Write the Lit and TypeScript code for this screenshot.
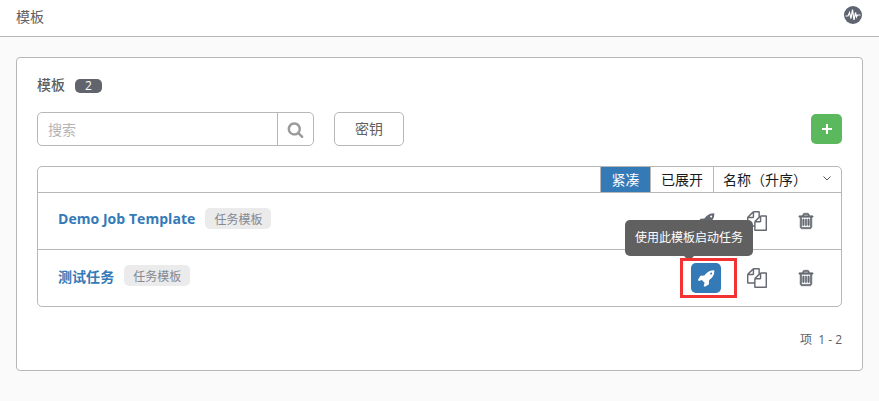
import { LitElement, html, css, svg } from "lit";
import { customElement } from "lit/decorators.js";

const ROCKET = svg`<path d="M1504 448q0-40-28-68t-68-28-68 28-28 68 28 68 68 28 68-28 28-68zm224-288q0 249-75.5 430.5t-253.5 360.5q-81 80-195 176l-20 379q-2 16-16 26l-384 224q-7 4-16 4-12 0-23-9l-64-64q-13-14-8-32l85-276-281-281-276 85q-3 1-9 1-14 0-23-9l-64-64q-17-19-5-39l224-384q10-14 26-16l379-20q96-114 176-195 188-187 358-258t431-71q14 0 24 9.500t10 22.500z"/>`;
const COPY = svg`<path d="M1696 384q40 0 68 28t28 68v1216q0 40-28 68t-68 28h-960q-40 0-68-28t-28-68v-288h-544q-40 0-68-28t-28-68v-672q0-40 20-88t48-76l408-408q28-28 76-48t88-20h416q40 0 68 28t28 68v328q68-40 128-40h416zm-544 213l-299 299h299v-299zm-640-384l-299 299h299v-299zm196 647l316-316v-416h-384v416q0 40-28 68t-68 28h-416v640h512v-256q0-40 20-88t48-76zm956 804v-1152h-384v416q0 40-28 68t-68 28h-416v640h896z"/>`;
const TRASH = svg`<path d="M704 736v576q0 14-9 23t-23 9h-64q-14 0-23-9t-9-23v-576q0-14 9-23t23-9h64q14 0 23 9t9 23zm256 0v576q0 14-9 23t-23 9h-64q-14 0-23-9t-9-23v-576q0-14 9-23t23-9h64q14 0 23 9t9 23zm256 0v576q0 14-9 23t-23 9h-64q-14 0-23-9t-9-23v-576q0-14 9-23t23-9h64q14 0 23 9t9 23zm128 724v-948h-896v948q0 22 7 40.500t14.500 27 10.500 8.500h832q3 0 10.500-8.500t14.500-27 7-40.500zm-672-1076h448l-48-117q-7-9-17-11h-317q-10 2-17 11zm928 32v64q0 14-9 23t-23 9h-96v948q0 83-47 143.500t-113 60.500h-832q-66 0-113-58.500t-47-141.500v-952h-96q-14 0-23-9t-9-23v-64q0-14 9-23t23-9h309l70-167q15-37 54-63t79-26h320q40 0 79 26t54 63l70 167h309q14 0 23 9t9 23z"/>`;
const SEARCH = svg`<path d="M1216 832q0-185-131.500-316.500t-316.500-131.500-316.500 131.500-131.500 316.500 131.500 316.500 316.500 131.500 316.500-131.500 131.500-316.500zm512 832q0 52-38 90t-90 38q-54 0-90-38l-343-342q-179 124-399 124-143 0-273.500-55.500t-225-150-150-225-55.500-273.500 55.500-273.500 150-225 225-150 273.500-55.500 273.500 55.500 225 150 150 225 55.500 273.500q0 220-124 399l343 343q37 37 37 90z"/>`;

const icon = (p: unknown, size: number, cls = "") =>
  html`<svg class="fa ${cls}" width=${size} height=${size} viewBox="0 0 1792 1792" fill="currentColor">${p}</svg>`;

@customElement("app-root")
export class AppRoot extends LitElement {
  static styles = css`
    :host {
      display: block;
      min-height: 401px;
      background: #fafafa;
      font-family: "Open Sans", "Noto Sans CJK SC", sans-serif;
      font-size: 12px;
      color: #606060;
      box-sizing: border-box;
    }
    * { box-sizing: border-box; }
    .fa { display: block; }
    .heavy { stroke: currentColor; stroke-width: 70; }
    .top {
      height: 37px;
      background: #fff;
      border-bottom: 1px solid #b7b7b7;
      display: flex;
      align-items: center;
      justify-content: space-between;
      padding: 0 17px 4px 16px;
      font-size: 14px;
      color: #606060;
    }
    .pulse { display: block; margin-top: -2px; }
    .main { padding: 20px 16px 30px; }
    .card {
      height: 314px;
      background: #fff;
      border: 1px solid #b7b7b7;
      border-radius: 4px;
      padding: 20px;
      display: flex;
      flex-direction: column;
    }
    .title {
      display: flex;
      align-items: center;
      gap: 10px;
      height: 15px;
      font-size: 14px;
      font-weight: 500;
      color: #606060;
    }
    .title .label { margin-top: -4px; }
    .count {
      width: 27px;
      height: 14px;
      border-radius: 5px;
      background: #62646d;
      color: #fff;
      font-size: 12px;
      font-weight: 400;
      line-height: 14px;
      text-align: center;
    }
    .tools {
      display: flex;
      align-items: flex-start;
      margin-top: 19px;
      height: 35px;
    }
    .search {
      width: 277px;
      height: 34px;
      display: flex;
      border: 1px solid #b7b7b7;
      border-radius: 5px;
      background: #fff;
    }
    .search .ph {
      flex: 1;
      padding-left: 10px;
      line-height: 33px;
      font-size: 14px;
      color: #b4b4b4;
    }
    .search .go {
      width: 36px;
      border-left: 1px solid #b7b7b7;
      display: flex;
      align-items: center;
      justify-content: center;
      color: #9b9b9b;
    }
    .keys {
      margin-left: 20px;
      width: 70px;
      height: 34px;
      border: 1px solid #b7b7b7;
      border-radius: 5px;
      display: flex;
      align-items: center;
      justify-content: center;
      font-size: 14px;
      color: #606060;
      padding-bottom: 2px;
    }
    .add {
      margin-left: auto;
      margin-top: 2px;
      width: 31px;
      height: 30px;
      border-radius: 5px;
      background: #5cb85c;
      display: flex;
      align-items: center;
      justify-content: center;
    }
    .list {
      margin-top: 19px;
      height: 141px;
      border: 1px solid #b7b7b7;
      border-radius: 5px;
      display: flex;
      flex-direction: column;
    }
    .bar {
      height: 26px;
      border-bottom: 1px solid #b7b7b7;
      display: flex;
      justify-content: flex-end;
      font-size: 14px;
      color: #161b1f;
    }
    .seg {
      display: flex;
      align-items: center;
      justify-content: center;
      border-left: 1px solid #b7b7b7;
      padding-bottom: 1px;
    }
    .seg.a {
      width: 50px;
      background: #337ab7;
      color: #fff;
    }
    .seg.b { width: 63px; }
    .seg.c {
      width: 128px;
      justify-content: space-between;
      padding: 0 10px 1px 9px;
    }
    .row {
      height: 57px;
      display: flex;
      align-items: center;
      padding: 0 20px;
    }
    .row + .row { border-top: 1px solid #b7b7b7; }
    .info {
      display: flex;
      align-items: center;
      padding-bottom: 5px;
    }
    .name {
      font-size: 14px;
      font-weight: 700;
      color: #337ab7;
      letter-spacing: 0.05px;
    }
    .tag {
      margin-left: 10px;
      width: 66px;
      height: 21px;
      border-radius: 5px;
      background: #ebebeb;
      color: #848992;
      font-size: 12px;
      display: flex;
      align-items: center;
      justify-content: center;
    }
    .actions {
      margin-left: auto;
      display: flex;
      gap: 19px;
      color: #646972;
    }
    .act {
      position: relative;
      width: 30px;
      height: 30px;
      border-radius: 5px;
      display: flex;
      align-items: center;
      justify-content: center;
    }
    .act.launch { margin-right: 2px; }
    .act.on { background: #337ab7; color: #fff; }
    .tip {
      position: absolute;
      left: -66px;
      top: -43px;
      width: 128px;
      height: 36px;
      border-radius: 5px;
      background: #606060;
      color: #fff;
      font-size: 12px;
      display: flex;
      align-items: center;
      justify-content: center;
      white-space: nowrap;
      padding-bottom: 2px;
    }
    .tip::after {
      content: "";
      position: absolute;
      left: 59px;
      bottom: -5px;
      border: 5px solid transparent;
      border-bottom: 0;
      border-top-color: #606060;
    }
    .mark {
      position: absolute;
      left: -11px;
      top: -5px;
      width: 57px;
      height: 40px;
      border: 3px solid #f33333;
    }
    .foot {
      margin-top: 25px;
      text-align: right;
      font-size: 12px;
      color: #606060;
      line-height: 16px;
    }
  `;

  private row(name: string, active: boolean) {
    return html`<div class="row">
      <div class="info">
        <span class="name">${name}</span>
        <span class="tag">任务模板</span>
      </div>
      <div class="actions">
        <div class="act launch ${active ? "on" : ""}">
          ${icon(ROCKET, 18)}
          ${active ? html`<div class="tip">使用此模板启动任务</div><div class="mark"></div>` : ""}
        </div>
        <div class="act">${icon(COPY, 20)}</div>
        <div class="act">${icon(TRASH, 18, "heavy")}</div>
      </div>
    </div>`;
  }

  render() {
    return html`
      <div class="top">
        <span>模板</span>
        <svg class="pulse" width="18" height="18" viewBox="0 0 18 18">
          <circle cx="9" cy="9" r="9" fill="#5e6570"></circle>
          <polyline points="1.5,10 4,10 5.5,6.500 7,12.5 8.500,3.500 10,14 11.500,6.500 12.500,11 13.500,9 16.500,9" fill="none" stroke="#fff" stroke-width="1.200"></polyline>
        </svg>
      </div>
      <div class="main">
        <div class="card">
          <div class="title"><span class="label">模板</span><span class="count">2</span></div>
          <div class="tools">
            <div class="search">
              <div class="ph">搜索</div>
              <div class="go">${icon(SEARCH, 17)}</div>
            </div>
            <div class="keys">密钥</div>
            <div class="add">
              <svg width="10" height="10" viewBox="0 0 10 10"><path d="M5 0v10M0 5h10" stroke="#fff" stroke-width="2"></path></svg>
            </div>
          </div>
          <div class="list">
            <div class="bar">
              <div class="seg a">紧凑</div>
              <div class="seg b">已展开</div>
              <div class="seg c">
                <span>名称（升序）</span>
                <svg width="8" height="5" viewBox="0 0 8 5"><path d="M.5.5L4 4 7.500.5" fill="none" stroke="#555" stroke-width="1"></path></svg>
              </div>
            </div>
            ${this.row("Demo Job Template", false)}
            ${this.row("测试任务", true)}
          </div>
          <div class="foot">项 &nbsp;1 - 2</div>
        </div>
      </div>
    `;
  }
}
